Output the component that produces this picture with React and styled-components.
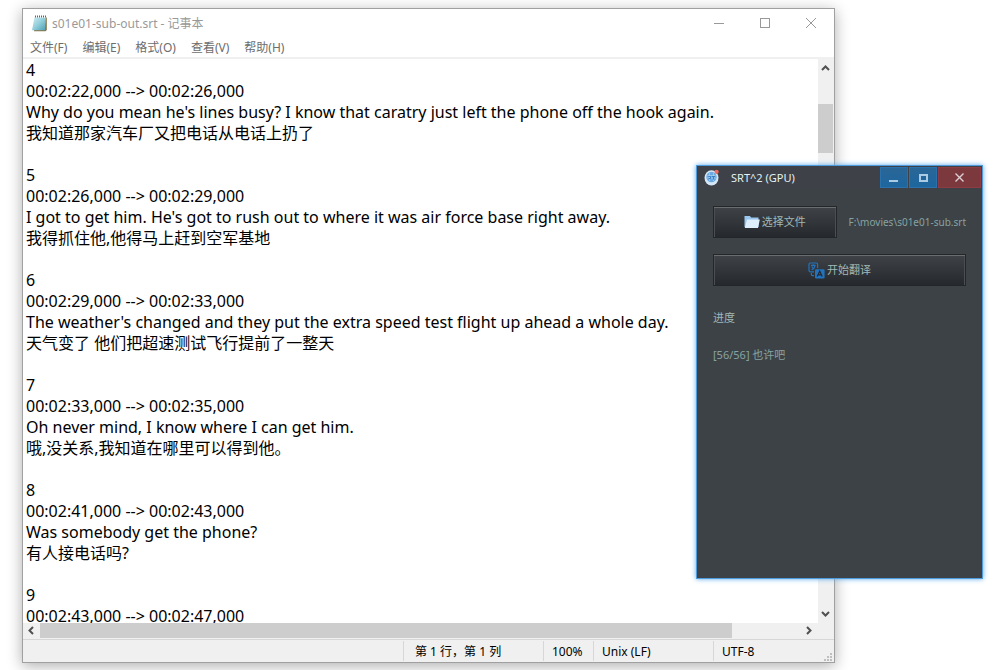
import React from "react";
import styled, { createGlobalStyle } from "styled-components";

const GlobalStyle = createGlobalStyle`
  *, *::before, *::after { box-sizing: border-box; }
  body {
    margin: 0;
    background: #fff;
    font-family: "Noto Sans", "Noto Sans CJK SC", sans-serif;
    font-size: 12px;
  }
  button { font-family: inherit; margin: 0; padding: 0; border: 0; background: none; }
`;

const Desktop = styled.div`
  position: relative;
  min-height: 100vh;
  display: flex;
  padding: 8px 159px 7px 22px;
  overflow: hidden;
`;

/* ---------- Notepad ---------- */

const NotepadWindow = styled.section`
  flex: 1;
  min-width: 0;
  display: flex;
  flex-direction: column;
  background: #fff;
  border: 1px solid #a0a0a0;
  box-shadow: 0 3px 14px rgba(0, 0, 0, 0.32);
`;

const TitleBar = styled.header`
  display: flex;
  align-items: center;
  height: 29px;
  padding-left: 8px;
  color: #999;
`;

const Title = styled.h1`
  flex: 1;
  margin: 0 0 0 4px;
  font-size: 12px;
  font-weight: 400;
  line-height: 16px;
`;

const CaptionButton = styled.button`
  display: grid;
  place-items: center;
  width: 46px;
  height: 29px;
  color: #999;
`;

const MenuBar = styled.nav`
  display: flex;
  align-items: flex-end;
  gap: 15px;
  height: 21px;
  padding: 0 7px;
  border-bottom: 2px solid #f0f0f0;
`;

const MenuItem = styled.button`
  font-size: 12px;
  line-height: 18px;
  height: 18px;
  color: #6d6d6d;
  white-space: nowrap;
`;

const EditorArea = styled.div`
  flex: 1;
  min-height: 0;
  display: grid;
  grid-template-columns: minmax(0, 1fr) 16px;
  grid-template-rows: minmax(0, 1fr) 16px;
  background: #f0f0f0;
`;

const Editor = styled.textarea`
  width: 100%;
  height: 100%;
  padding: 1px 3px 0;
  border: 0;
  outline: 0;
  resize: none;
  overflow: hidden;
  white-space: pre;
  background: #fff;
  color: #000;
  font-family: "Noto Sans", "Noto Sans CJK SC", sans-serif;
  font-size: 16px;
  line-height: 21px;
`;

const ScrollTrack = styled.div`
  display: flex;
  flex-direction: ${(p) => (p.$vertical ? "column" : "row")};
  padding: ${(p) => (p.$vertical ? "0 1px 0 0" : "0 0 1px 0")};
`;

const ScrollArrow = styled.button`
  flex: none;
  display: grid;
  place-items: center;
  width: ${(p) => (p.$vertical ? "15px" : "17px")};
  height: ${(p) => (p.$vertical ? "18px" : "15px")};
  color: #505050;
`;

const ScrollSpace = styled.div`
  flex: ${(p) => p.$grow} 1 0;
`;

const ScrollThumb = styled.div`
  flex: ${(p) => p.$grow} 1 0;
  background: #cdcdcd;
`;

const StatusBar = styled.footer`
  display: flex;
  justify-content: flex-end;
  height: 23px;
  padding-top: 1px;
  background: #f0f0f0;
  border-top: 1px solid #d7d7d7;
`;

const StatusCell = styled.div`
  width: ${(p) => p.$width}px;
  height: 20px;
  padding-left: ${(p) => p.$indent || 8}px;
  border-left: 1px solid #d7d7d7;
  font-size: 12px;
  line-height: 22px;
  color: #000;
  white-space: nowrap;
`;

const LastCell = styled(StatusCell)`
  display: flex;
  justify-content: space-between;
`;

const Grip = styled.svg`
  align-self: flex-end;
  margin-right: 2px;
`;

/* ---------- Translator ---------- */

const ToolWindow = styled.section`
  position: absolute;
  top: 165px;
  right: 11px;
  width: 287px;
  min-height: 414px;
  background: #3d4246;
  border: 1px solid #4f9bdc;
  box-shadow: 0 0 5px #5aa9ec;
  color: #86a3a3;
  font-size: 11px;
`;

const ToolTitleBar = styled.header`
  display: flex;
  align-items: center;
  height: 23px;
  padding: 0 1px 0 7px;
  background: #3e4148;
`;

const ToolTitle = styled.h2`
  flex: 1;
  margin: 0 0 0 11px;
  font-size: 11px;
  font-weight: 400;
  line-height: 22px;
  color: #e4f2f2;
`;

const ToolCaptionButton = styled.button`
  display: grid;
  place-items: center;
  width: ${(p) => (p.$danger ? 43 : 28)}px;
  height: 21px;
  margin-left: 1px;
  border: 1px solid ${(p) => (p.$danger ? "#8c3c42" : "#2b72ac")};
  background: ${(p) => (p.$danger ? "#7b383d" : "linear-gradient(#2a6696, #1d669f)")};
  color: ${(p) => (p.$danger ? "#dccfd2" : "#a9cbe4")};
`;

const ToolBody = styled.div`
  display: flex;
  flex-direction: column;
  gap: 16px;
  padding: 17px 16px 0;
`;

const FileRow = styled.div`
  display: flex;
  align-items: center;
  gap: 12px;
`;

const ActionButton = styled.button`
  display: flex;
  justify-content: center;
  align-items: center;
  gap: 2px;
  height: 32px;
  flex: ${(p) => (p.$fill ? "none" : "1")};
  border: 1px solid #24272a;
  box-shadow: inset 0 1px 0 #6a6c6d, inset 1px 0 0 #4b4f52, inset -1px 0 0 #4b4f52;
  background: linear-gradient(#3f4347, #25282c);
  color: #9fb9b9;
  font-size: 11px;
  line-height: 16px;
`;

const FilePath = styled.span`
  flex: none;
  font-size: 10px;
  line-height: 16px;
`;

const ProgressBlock = styled.div`
  display: flex;
  flex-direction: column;
  gap: 21px;
  padding-top: 8px;
`;

const ProgressText = styled.p`
  margin: 0;
  font-size: 11px;
  line-height: 16px;
  color: ${(p) => (p.$strong ? "#a0b8b8" : "#86a3a3")};
`;

const menus = ["文件(F)", "编辑(E)", "格式(O)", "查看(V)", "帮助(H)"];

const subtitles = `4
00:02:22,000 --> 00:02:26,000
Why do you mean he's lines busy? I know that caratry just left the phone off the hook again.
我知道那家汽车厂又把电话从电话上扔了

5
00:02:26,000 --> 00:02:29,000
I got to get him. He's got to rush out to where it was air force base right away.
我得抓住他,他得马上赶到空军基地

6
00:02:29,000 --> 00:02:33,000
The weather's changed and they put the extra speed test flight up ahead a whole day.
天气变了 他们把超速测试飞行提前了一整天

7
00:02:33,000 --> 00:02:35,000
Oh never mind, I know where I can get him.
哦,没关系,我知道在哪里可以得到他。

8
00:02:41,000 --> 00:02:43,000
Was somebody get the phone?
有人接电话吗?

9
00:02:43,000 --> 00:02:47,000`;

const arrowPaths = {
  up: "M1 6 4.5 2.5 8 6",
  down: "M1 2 4.5 5.5 8 2",
  left: "M6 1 2.5 4.5 6 8",
  right: "M2 1 5.5 4.5 2 8",
};

function Arrow({ dir }) {
  return (
    <svg width="9" height="9" viewBox="0 0 9 9" fill="none" stroke="currentColor" strokeWidth="2" aria-hidden="true">
      <path d={arrowPaths[dir]} />
    </svg>
  );
}

function NotepadIcon() {
  return (
    <svg width="17" height="17" viewBox="0 0 17 17" aria-hidden="true">
      <defs>
        <linearGradient id="pad" x1="0" y1="0" x2="1" y2="1">
          <stop offset="0" stopColor="#d2eef3" />
          <stop offset="0.5" stopColor="#92cedb" />
          <stop offset="1" stopColor="#4b9fb3" />
        </linearGradient>
      </defs>
      <path d="M5 2.5H15.8V15L14.5 16.3H3Z" fill="#8a7448" />
      <path d="M3.5 2H15L14 15.2H1Z" fill="url(#pad)" />
      <path d="M3.6 2.500H15" stroke="#e4f4f7" />
      <path d="M4.500 0.500v2M6.500 0.500v2M8.500 0.500v2M10.500 0.500v2M12.500 0.500v2M14.500 0.500v2" stroke="#5b6668" />
    </svg>
  );
}

function AppIcon() {
  return (
    <svg width="16" height="17" viewBox="0 0 16 17" aria-hidden="true">
      <ellipse cx="7.5" cy="8.8" rx="7" ry="7.6" fill="#d5e7f7" />
      <circle cx="7.5" cy="8" r="5.2" fill="#6aa9e2" />
      <path d="M3.5 6.5h8M3 9h9M5.5 4v8M9.5 4v8" stroke="#a9cff0" strokeWidth="0.8" />
      <path d="M4.5 7.5h2v2h-2M8 7.5h3M9.5 7.5v3" stroke="#3d7fc4" fill="none" />
      <circle cx="12.6" cy="2.8" r="2.1" fill="#ee6a63" />
    </svg>
  );
}

function FolderIcon() {
  return (
    <svg width="16" height="14" viewBox="0 0 16 14" aria-hidden="true">
      <path d="M0.5 1H6l1 1.5h7.5V12H0.5Z" fill="#9ac7ef" />
      <path d="M3 4.5h12.8L14 13H0.8Z" fill="#deeefc" />
    </svg>
  );
}

function TranslateIcon() {
  return (
    <svg width="17" height="17" viewBox="0 0 17 17" fill="none" stroke="#2273bd" strokeWidth="1.2" aria-hidden="true">
      <path d="M6 9.8H2.2Q1 9.8 1 8.6V2.2Q1 1 2.2 1H8.4Q9.6 1 9.6 2.2V6" />
      <path d="M3 3.4h4.6M5.3 2.2v1.2M3.6 8C5.4 7.2 6.6 5.6 7 3.6M3.8 4.4C4.4 5.8 5.2 6.6 6 7" />
      <path d="M3.4 11v1.6q0 1 1 1H6" />
      <rect x="7" y="7.2" width="9.6" height="9.2" rx="1.2" fill="#2273bd" stroke="none" />
      <path d="M9.2 14.6 11.7 9.2 14.2 14.6M10.1 12.8h3.2" stroke="#25282c" />
    </svg>
  );
}

export default function App() {
  return (
    <>
      <GlobalStyle />
      <Desktop>
        <NotepadWindow aria-label="记事本">
          <TitleBar>
            <NotepadIcon />
            <Title>s01e01-sub-out.srt - 记事本</Title>
            <CaptionButton aria-label="最小化">
              <svg width="11" height="11" stroke="currentColor"><path d="M0 5.5H10" /></svg>
            </CaptionButton>
            <CaptionButton aria-label="最大化">
              <svg width="11" height="11" stroke="currentColor" fill="none"><rect x="0.5" y="0.5" width="9" height="9" /></svg>
            </CaptionButton>
            <CaptionButton aria-label="关闭">
              <svg width="11" height="11" stroke="currentColor"><path d="M0 0 10 10M10 0 0 10" /></svg>
            </CaptionButton>
          </TitleBar>
          <MenuBar>
            {menus.map((m) => (
              <MenuItem key={m}>{m}</MenuItem>
            ))}
          </MenuBar>
          <EditorArea>
            <Editor aria-label="文本编辑器" defaultValue={subtitles} spellCheck={false} />
            <ScrollTrack $vertical>
              <ScrollArrow $vertical aria-label="向上滚动"><Arrow dir="up" /></ScrollArrow>
              <ScrollSpace $grow={27} />
              <ScrollThumb $grow={49} />
              <ScrollSpace $grow={452} />
              <ScrollArrow $vertical aria-label="向下滚动"><Arrow dir="down" /></ScrollArrow>
            </ScrollTrack>
            <ScrollTrack>
              <ScrollArrow aria-label="向左滚动"><Arrow dir="left" /></ScrollArrow>
              <ScrollThumb $grow={692} />
              <ScrollSpace $grow={69} />
              <ScrollArrow aria-label="向右滚动"><Arrow dir="right" /></ScrollArrow>
            </ScrollTrack>
          </EditorArea>
          <StatusBar>
            <StatusCell $width={140} $indent={11}>第 1 行，第 1 列</StatusCell>
            <StatusCell $width={50}>100%</StatusCell>
            <StatusCell $width={120}>Unix (LF)</StatusCell>
            <LastCell $width={121}>
              <span>UTF-8</span>
              <Grip width="8" height="8" fill="#bfbfbf" aria-hidden="true">
                <path d="M6 0h2v2h-2zM3 3h2v2h-2zM6 3h2v2h-2zM0 6h2v2h-2zM3 6h2v2h-2zM6 6h2v2h-2z" />
              </Grip>
            </LastCell>
          </StatusBar>
        </NotepadWindow>

        <ToolWindow aria-label="SRT^2">
          <ToolTitleBar>
            <AppIcon />
            <ToolTitle>SRT^2 (GPU)</ToolTitle>
            <ToolCaptionButton aria-label="最小化">
              <svg width="10" height="10" fill="currentColor"><path d="M0 7h9v2H0z" /></svg>
            </ToolCaptionButton>
            <ToolCaptionButton aria-label="最大化">
              <svg width="9" height="8" fill="none" stroke="currentColor" strokeWidth="2"><rect x="1" y="1" width="7" height="6" /></svg>
            </ToolCaptionButton>
            <ToolCaptionButton $danger aria-label="关闭">
              <svg width="9" height="9" stroke="currentColor" strokeWidth="1.4"><path d="M0.5 0.5 8.5 8.5M8.5 0.5 0.5 8.5" /></svg>
            </ToolCaptionButton>
          </ToolTitleBar>
          <ToolBody>
            <FileRow>
              <ActionButton>
                <FolderIcon />
                选择文件
              </ActionButton>
              <FilePath>F:\movies\s01e01-sub.srt</FilePath>
            </FileRow>
            <ActionButton $fill>
              <TranslateIcon />
              开始翻译
            </ActionButton>
            <ProgressBlock>
              <ProgressText $strong>进度</ProgressText>
              <ProgressText>[56/56] 也许吧</ProgressText>
            </ProgressBlock>
          </ToolBody>
        </ToolWindow>
      </Desktop>
    </>
  );
}
